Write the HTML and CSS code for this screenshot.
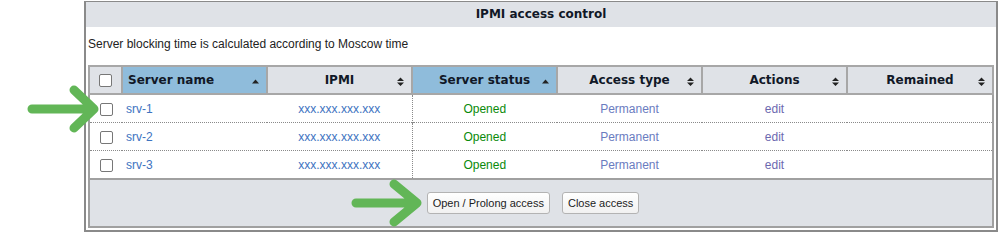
FILE: index.html
```html
<!DOCTYPE html>
<html lang="en">
<head>
    <meta charset="UTF-8">
    <title>IPMI access control</title>
    <link rel="stylesheet" href="styles.css">
</head>
<body>
    <div class="panel">
        <div class="panel-title">IPMI access control</div>
        <div class="panel-body">
            <div class="note">Server blocking time is calculated according to Moscow time</div>
            <table class="grid">
                <colgroup>
                    <col class="col-check">
                    <col class="col-wide">
                    <col class="col-wide">
                    <col class="col-wide">
                    <col class="col-wide">
                    <col class="col-wide">
                    <col>
                </colgroup>
                <thead>
                    <tr>
                        <th class="check"><span class="box"></span></th>
                        <th class="sorted left">Server name
                            <svg class="sort" width="7" height="10" viewBox="0 0 7 10"><path d="M0 6.5 L3.5 2.5 L7 6.5 Z"/></svg>
                        </th>
                        <th>IPMI
                            <svg class="sort" width="7" height="10" viewBox="0 0 7 10"><path d="M0 4 L3.5 0.5 L7 4 Z M0 5.5 L3.5 9 L7 5.5 Z"/></svg>
                        </th>
                        <th class="sorted">Server status
                            <svg class="sort" width="7" height="10" viewBox="0 0 7 10"><path d="M0 6.5 L3.5 2.5 L7 6.5 Z"/></svg>
                        </th>
                        <th>Access type
                            <svg class="sort" width="7" height="10" viewBox="0 0 7 10"><path d="M0 4 L3.5 0.5 L7 4 Z M0 5.5 L3.5 9 L7 5.5 Z"/></svg>
                        </th>
                        <th>Actions
                            <svg class="sort" width="7" height="10" viewBox="0 0 7 10"><path d="M0 4 L3.5 0.5 L7 4 Z M0 5.5 L3.5 9 L7 5.5 Z"/></svg>
                        </th>
                        <th>Remained
                            <svg class="sort" width="7" height="10" viewBox="0 0 7 10"><path d="M0 4 L3.5 0.5 L7 4 Z M0 5.5 L3.5 9 L7 5.5 Z"/></svg>
                        </th>
                    </tr>
                </thead>
                <tbody>
                    <tr>
                        <td class="check"><span class="box"></span></td>
                        <td class="left"><a class="link">srv-1</a></td>
                        <td><a class="link">xxx.xxx.xxx.xxx</a></td>
                        <td class="status">Opened</td>
                        <td class="type">Permanent</td>
                        <td><a class="edit">edit</a></td>
                        <td></td>
                    </tr>
                    <tr>
                        <td class="check"><span class="box"></span></td>
                        <td class="left"><a class="link">srv-2</a></td>
                        <td><a class="link">xxx.xxx.xxx.xxx</a></td>
                        <td class="status">Opened</td>
                        <td class="type">Permanent</td>
                        <td><a class="edit">edit</a></td>
                        <td></td>
                    </tr>
                    <tr>
                        <td class="check"><span class="box"></span></td>
                        <td class="left"><a class="link">srv-3</a></td>
                        <td><a class="link">xxx.xxx.xxx.xxx</a></td>
                        <td class="status">Opened</td>
                        <td class="type">Permanent</td>
                        <td><a class="edit">edit</a></td>
                        <td></td>
                    </tr>
                </tbody>
                <tfoot>
                    <tr>
                        <td colspan="7">
                            <div class="actions">
                                <button class="btn">Open / Prolong access</button>
                                <button class="btn">Close access</button>
                            </div>
                        </td>
                    </tr>
                </tfoot>
            </table>
        </div>
    </div>

    <!-- pointers drawn over the screenshot -->
    <svg class="pointer pointer-row" width="80" height="56" viewBox="0 0 80 56">
        <path d="M6 28 H66 M48 9 L68 28 L48 47"/>
    </svg>
    <svg class="pointer pointer-btn" width="80" height="56" viewBox="0 0 80 56">
        <path d="M6 28 H66 M44 9 L67 28 L44 47"/>
    </svg>
</body>
</html>
```

FILE: styles.css
```css
/* Base */
body {
    margin: 0;
    font-family: 'Liberation Sans', Arial, sans-serif;
    font-size: 12px;
    color: #1c1c1c;
    background: #ffffff;
}

/* Panel */
.panel {
    margin: 1px 0 0 84px;
    width: 914px;
    box-sizing: border-box;
    border: 2px solid #8a8a8a;
    border-top-width: 1px;
}
.panel-title {
    height: 25px;
    line-height: 25px;
    background-color: #dfe2e7;
    text-align: center;
    font-family: 'DejaVu Sans', Verdana, sans-serif;
    font-weight: bold;
    font-size: 12px;
    color: #111827;
}
.panel-body {
    padding: 0 2px 2px;
}
.note {
    padding-top: 9px;
    height: 16px;
    line-height: 16px;
    color: #222;
}

/* Grid */
.grid {
    margin-top: 13px;
    width: 906px;
    border-collapse: collapse;
    table-layout: fixed;
    border: 2px solid #a0a0a0;
}
.col-check {
    width: 33px;
}
.col-wide {
    width: 145px;
}
.grid th {
    position: relative;
    height: 26px;
    padding: 0 5px;
    background-color: #dfe2e7;
    border: 2px solid #a7a7a7;
    font-family: 'DejaVu Sans', Verdana, sans-serif;
    font-size: 12px;
    font-weight: bold;
    color: #111827;
    text-align: center;
}
.grid th.sorted {
    background-color: #8fbcdb;
}
.grid th.left, .grid td.left {
    text-align: left;
}
.sort {
    position: absolute;
    right: 7px;
    top: 10px;
    fill: #222;
}
.grid td {
    height: 27px;
    padding: 0 4px;
    text-align: center;
    border-top: 1px dotted #8a8a8a;
}
.grid tbody td.status {
    border-left: 1px dotted #8a8a8a;
    color: #0a8a0a;
}
.grid td.type {
    color: #6a7cbf;
}
.link {
    color: #3d73bf;
}
.edit {
    color: #6c69b0;
}
.check {
    text-align: center;
}
.grid td.check, .grid th.check {
    padding: 0;
}
.box {
    display: inline-block;
    width: 11px;
    height: 11px;
    border: 1px solid #777;
    border-radius: 2px;
    background: #fff;
    vertical-align: middle;
}

/* Footer */
.grid tfoot td {
    height: 46px;
    padding: 0;
    background-color: #dfe2e7;
    border-top: 2px solid #a0a0a0;
}
.actions {
    display: flex;
    justify-content: center;
    gap: 12px;
    padding-right: 16px;
}
.btn {
    height: 22px;
    padding: 0 5px;
    font-family: 'Liberation Sans', Arial, sans-serif;
    font-size: 11px;
    color: #1c1c1c;
    background: linear-gradient(#ffffff, #f1f1f1);
    border: 1px solid #b3b3b3;
    border-radius: 3px;
    cursor: pointer;
}

/* Pointers */
.pointer {
    position: absolute;
    fill: none;
    stroke: #62b657;
    stroke-width: 9;
    stroke-linecap: round;
    stroke-linejoin: round;
}
.pointer-row {
    left: 26px;
    top: 81px;
}
.pointer-btn {
    left: 350px;
    top: 175px;
}
```
